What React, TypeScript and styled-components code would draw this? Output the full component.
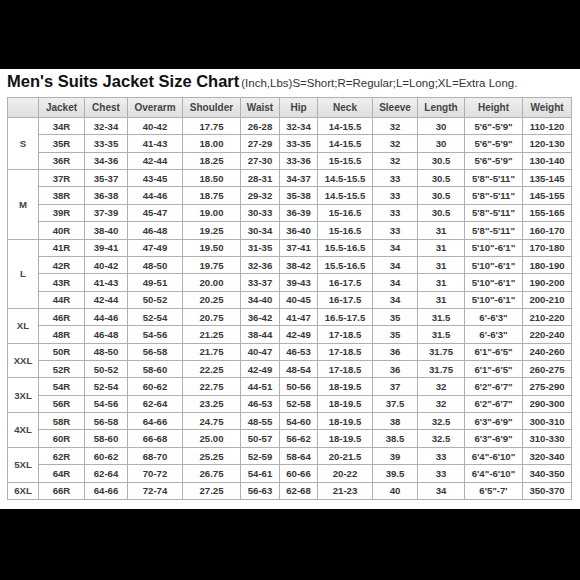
import styled, { createGlobalStyle } from "styled-components";

const GlobalStyle = createGlobalStyle`
  html, body {
    margin: 0;
    padding: 0;
    background: #000;
  }
  #root {
    width: 580px;
    height: 580px;
    background: #000;
    overflow: hidden;
  }
`;

type Row = string[];
type Group = { size: string; rows: Row[] };

const columns = [
  { label: "", width: 31 },
  { label: "Jacket", width: 46 },
  { label: "Chest", width: 43 },
  { label: "Overarm", width: 55 },
  { label: "Shoulder", width: 58 },
  { label: "Waist", width: 39 },
  { label: "Hip", width: 38 },
  { label: "Neck", width: 55 },
  { label: "Sleeve", width: 45 },
  { label: "Length", width: 47 },
  { label: "Height", width: 58 },
  { label: "Weight", width: 49 },
];

const groups: Group[] = [
  {
    size: "S",
    rows: [
      ["34R", "32-34", "40-42", "17.75", "26-28", "32-34", "14-15.5", "32", "30", `5'6"-5'9"`, "110-120"],
      ["35R", "33-35", "41-43", "18.00", "27-29", "33-35", "14-15.5", "32", "30", `5'6"-5'9"`, "120-130"],
      ["36R", "34-36", "42-44", "18.25", "27-30", "33-36", "15-15.5", "32", "30.5", `5'6"-5'9"`, "130-140"],
    ],
  },
  {
    size: "M",
    rows: [
      ["37R", "35-37", "43-45", "18.50", "28-31", "34-37", "14.5-15.5", "33", "30.5", `5'8"-5'11"`, "135-145"],
      ["38R", "36-38", "44-46", "18.75", "29-32", "35-38", "14.5-15.5", "33", "30.5", `5'8"-5'11"`, "145-155"],
      ["39R", "37-39", "45-47", "19.00", "30-33", "36-39", "15-16.5", "33", "30.5", `5'8"-5'11"`, "155-165"],
      ["40R", "38-40", "46-48", "19.25", "30-34", "36-40", "15-16.5", "33", "31", `5'8"-5'11"`, "160-170"],
    ],
  },
  {
    size: "L",
    rows: [
      ["41R", "39-41", "47-49", "19.50", "31-35", "37-41", "15.5-16.5", "34", "31", `5'10"-6'1"`, "170-180"],
      ["42R", "40-42", "48-50", "19.75", "32-36", "38-42", "15.5-16.5", "34", "31", `5'10"-6'1"`, "180-190"],
      ["43R", "41-43", "49-51", "20.00", "33-37", "39-43", "16-17.5", "34", "31", `5'10"-6'1"`, "190-200"],
      ["44R", "42-44", "50-52", "20.25", "34-40", "40-45", "16-17.5", "34", "31", `5'10"-6'1"`, "200-210"],
    ],
  },
  {
    size: "XL",
    rows: [
      ["46R", "44-46", "52-54", "20.75", "36-42", "41-47", "16.5-17.5", "35", "31.5", `6'-6'3"`, "210-220"],
      ["48R", "46-48", "54-56", "21.25", "38-44", "42-49", "17-18.5", "35", "31.5", `6'-6'3"`, "220-240"],
    ],
  },
  {
    size: "XXL",
    rows: [
      ["50R", "48-50", "56-58", "21.75", "40-47", "46-53", "17-18.5", "36", "31.75", `6'1"-6'5"`, "240-260"],
      ["52R", "50-52", "58-60", "22.25", "42-49", "48-54", "17-18.5", "36", "31.75", `6'1"-6'5"`, "260-275"],
    ],
  },
  {
    size: "3XL",
    rows: [
      ["54R", "52-54", "60-62", "22.75", "44-51", "50-56", "18-19.5", "37", "32", `6'2"-6'7"`, "275-290"],
      ["56R", "54-56", "62-64", "23.25", "46-53", "52-58", "18-19.5", "37.5", "32", `6'2"-6'7"`, "290-300"],
    ],
  },
  {
    size: "4XL",
    rows: [
      ["58R", "56-58", "64-66", "24.75", "48-55", "54-60", "18-19.5", "38", "32.5", `6'3"-6'9"`, "300-310"],
      ["60R", "58-60", "66-68", "25.00", "50-57", "56-62", "18-19.5", "38.5", "32.5", `6'3"-6'9"`, "310-330"],
    ],
  },
  {
    size: "5XL",
    rows: [
      ["62R", "60-62", "68-70", "25.25", "52-59", "58-64", "20-21.5", "39", "33", `6'4"-6'10"`, "320-340"],
      ["64R", "62-64", "70-72", "26.75", "54-61", "60-66", "20-22", "39.5", "33", `6'4"-6'10"`, "340-350"],
    ],
  },
  {
    size: "6XL",
    rows: [["66R", "64-66", "72-74", "27.25", "56-63", "62-68", "21-23", "40", "34", `6'5"-7'`, "350-370"]],
  },
];

const Sheet = styled.div`
  margin-top: 69px;
  height: 440px;
  background: #fff;
  font-family: "Liberation Sans", Arial, sans-serif;
  box-sizing: border-box;
  padding: 3px 0 0 7px;
`;

const TitleRow = styled.div`
  display: flex;
  align-items: baseline;
  gap: 2px;
  height: 19px;
  margin-bottom: 6px;
  white-space: nowrap;
`;

const Title = styled.h1`
  margin: 0;
  font-size: 16.5px;
  line-height: 19px;
  font-weight: bold;
  color: #111;
`;

const Note = styled.span`
  font-size: 11.5px;
  color: #333;
`;

const Table = styled.table`
  width: 564px;
  border-collapse: collapse;
  table-layout: fixed;
  border: 1px solid #a9a9a9;
`;

const HeadRow = styled.tr`
  height: 20px;
  background: linear-gradient(#efefef, #dddddd);
`;

const DataRow = styled.tr`
  height: 17.36px;
`;

const HeadCell = styled.th`
  border: 1px solid #b0b0b0;
  padding: 0;
  font-size: 10px;
  font-weight: bold;
  color: #444;
  text-align: center;
`;

const Cell = styled.td<{ $size?: boolean }>`
  border: 1px solid #b0b0b0;
  padding: 0;
  font-size: 9.6px;
  font-weight: bold;
  color: ${(p) => (p.$size ? "#454545" : "#383838")};
  text-align: center;
  white-space: nowrap;
  overflow: hidden;
`;

export default function App() {
  return (
    <>
      <GlobalStyle />
      <Sheet>
        <TitleRow>
          <Title>Men's Suits Jacket Size Chart</Title>
          <Note>(Inch,Lbs)S=Short;R=Regular;L=Long;XL=Extra Long.</Note>
        </TitleRow>
        <Table>
          <colgroup>
            {columns.map((c, i) => (
              <col key={i} style={{ width: c.width }} />
            ))}
          </colgroup>
          <thead>
            <HeadRow>
              {columns.map((c, i) => (
                <HeadCell key={i}>{c.label}</HeadCell>
              ))}
            </HeadRow>
          </thead>
          <tbody>
            {groups.map((g) =>
              g.rows.map((r, ri) => (
                <DataRow key={r[0]}>
                  {ri === 0 && (
                    <Cell $size rowSpan={g.rows.length}>
                      {g.size}
                    </Cell>
                  )}
                  {r.map((v, vi) => (
                    <Cell key={vi}>{v}</Cell>
                  ))}
                </DataRow>
              ))
            )}
          </tbody>
        </Table>
      </Sheet>
    </>
  );
}
